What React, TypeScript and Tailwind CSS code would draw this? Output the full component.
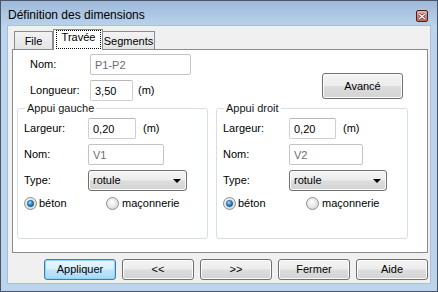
import { useId } from 'react';

const btnFace =
  'border-[#707070] bg-[linear-gradient(to_bottom,#f4f4f4_0%,#ececec_48%,#dddddd_52%,#d3d3d3_100%)] shadow-[inset_0_0_0_1px_#fbfbfb]';
const btnDefault =
  'border-[#3c7fb1] bg-[linear-gradient(to_bottom,#eaf6fd_0%,#d9f0fc_48%,#bee6fd_52%,#a7d9f5_100%)] shadow-[inset_0_0_0_1px_#8fd3f7]';

function WinButton({
  label,
  primary = false,
  className = '',
}: {
  label: string;
  primary?: boolean;
  className?: string;
}) {
  return (
    <button
      className={`flex items-center justify-center rounded-[3px] border text-[11px] leading-[13px] text-black ${
        primary ? btnDefault : btnFace
      } ${className}`}
    >
      {label}
    </button>
  );
}

function TextBox({ value, width, disabled = false }: { value: string; width: number; disabled?: boolean }) {
  return (
    <input
      readOnly
      value={value}
      style={{ width }}
      className={`h-[21px] rounded-[2px] border bg-white px-[4px] text-[11px] leading-[13px] outline-none ${
        disabled ? 'border-[#c4c4c4] text-[#6d6d6d]' : 'border-[#d0d0d0] border-t-[#b9b9b9] text-black'
      }`}
    />
  );
}

function Select({ value, width }: { value: string; width: number }) {
  return (
    <div
      style={{ width }}
      className={`flex h-[21px] items-center rounded-[3px] border pl-[4px] pr-[5px] text-[11px] leading-[13px] text-black ${btnFace}`}
    >
      <span className="flex-1">{value}</span>
      <svg width="8" height="4" viewBox="0 0 8 4">
        <path d="M0 0H8L4 4Z" fill="#000" />
      </svg>
    </div>
  );
}

function Radio({ checked }: { checked?: boolean }) {
  const id = useId().replace(/:/g, '');
  return (
    <svg width="13" height="13" viewBox="0 0 13 13" className="shrink-0">
      <defs>
        <radialGradient id={`f${id}`} cx="45%" cy="40%" r="65%">
          <stop offset="0" stopColor="#ffffff" />
          <stop offset="1" stopColor="#d6d6d6" />
        </radialGradient>
        <radialGradient id={`d${id}`} cx="40%" cy="35%" r="70%">
          <stop offset="0" stopColor="#a9e0fb" />
          <stop offset="0.5" stopColor="#2f8fd4" />
          <stop offset="1" stopColor="#1b5187" />
        </radialGradient>
      </defs>
      <circle cx="6.5" cy="6.5" r="6" fill={`url(#f${id})`} stroke="#8e8f8f" />
      {checked && <circle cx="6.5" cy="6.5" r="3.2" fill={`url(#d${id})`} stroke="#1f4a75" strokeWidth="0.6" />}
    </svg>
  );
}

function Row({ label, labelWidth, children }: { label: string; labelWidth: number; children: React.ReactNode }) {
  return (
    <div className="flex h-[21px] items-center">
      <span style={{ width: labelWidth }} className="shrink-0">
        {label}
      </span>
      {children}
    </div>
  );
}

function Appui({
  title,
  nom,
  labelWidth,
  width,
  nomWidth,
  selectWidth,
  largeurWidth,
  radioWidth,
}: {
  title: string;
  nom: string;
  labelWidth: number;
  width: number;
  nomWidth: number;
  selectWidth: number;
  largeurWidth: number;
  radioWidth: number;
}) {
  return (
    <fieldset style={{ width }} className="rounded-[3px] border border-[#d5dfe5] pb-[28px] pl-[6px]">
      <legend className="ml-[1px] px-[2px] text-[11px] leading-[13px] text-[#151515]">{title}</legend>
      <div className="mt-[3px] flex flex-col gap-[5px]">
        <Row label="Largeur:" labelWidth={labelWidth}>
          <TextBox value="0,20" width={largeurWidth} />
          <span className="ml-[7px]">(m)</span>
        </Row>
        <Row label="Nom:" labelWidth={labelWidth}>
          <TextBox value={nom} width={nomWidth} disabled />
        </Row>
        <Row label="Type:" labelWidth={labelWidth}>
          <Select value="rotule" width={selectWidth} />
        </Row>
      </div>
      <div className="mt-[6px] flex h-[13px] items-center">
        <div style={{ width: radioWidth }} className="flex items-center gap-[2px]">
          <Radio checked />
          <span>béton</span>
        </div>
        <div className="flex items-center gap-[3px]">
          <Radio />
          <span>maçonnerie</span>
        </div>
      </div>
    </fieldset>
  );
}

export default function App() {
  return (
    <div className="flex h-[292px] w-[438px] flex-col border border-[#4a5668] bg-[#bcd4ec] font-['Liberation_Sans',Arial,sans-serif] text-[11px] leading-[13px] text-black">
      {/* title bar */}
      <div className="flex h-[24px] shrink-0 items-start bg-[linear-gradient(to_bottom,#9fb9da,#b9d1ea)]">
        <span className="pl-[7px] pt-[7px] text-[12px] leading-[15px] text-black">Définition des dimensions</span>
        <div className="ml-auto mr-[9px] mt-[9px] flex h-[12px] w-[12px] items-center justify-center rounded-[2px] border border-[#4b1f1f] bg-[linear-gradient(to_bottom,#eab1a7,#c9645a)]">
          <svg width="8" height="7" viewBox="0 0 8 7">
            <path d="M1 1L7 6M7 1L1 6" stroke="#5a2a2a" strokeWidth="2.6" />
            <path d="M1 1L7 6M7 1L1 6" stroke="#ffffff" strokeWidth="1.5" />
          </svg>
        </div>
      </div>

      {/* client */}
      <div className="mx-[6px] flex h-[259px] flex-col border border-[#a9bfd9] bg-[#f0f0f0] pl-[4px] pr-[2px] pt-[3px]">
        {/* tabs */}
        <div className="flex h-[20px] items-end pl-[2px]">
          <div className="flex h-[18px] w-[39px] justify-center border border-b-0 border-[#898c95] bg-[linear-gradient(to_bottom,#f3f3f3,#e4e4e4)] pt-[3px]">
            File
          </div>
          <div className="relative z-10 -mb-px flex h-[21px] w-[50px] border border-b-0 border-[#898c95] bg-white pl-[2px] pr-[1px]">
            <span className="flex h-[19px] flex-1 justify-center border border-dotted border-black">Travée</span>
          </div>
          <div className="flex h-[18px] w-[52px] justify-center border border-b-0 border-l-0 border-[#898c95] bg-[linear-gradient(to_bottom,#f3f3f3,#e4e4e4)] pt-[3px]">
            Segments
          </div>
        </div>

        {/* panel */}
        <div className="flex h-[204px] flex-col border border-[#898c95] bg-white">
          <div className="flex items-start">
            <div className="ml-[17px] mt-[4px] flex flex-col gap-[5px]">
              <Row label="Nom:" labelWidth={60}>
                <TextBox value="P1-P2" width={101} disabled />
              </Row>
              <Row label="Longueur:" labelWidth={60}>
                <TextBox value="3,50" width={43} />
                <span className="ml-[5px]">(m)</span>
              </Row>
            </div>
            <WinButton label="Avancé" className="ml-auto mr-[24px] mt-[23px] h-[26px] w-[81px]" />
          </div>
          <div className="ml-[4px] mt-[1px] flex gap-[8px]">
            <Appui
              title="Appui gauche"
              nom="V1"
              width={191}
              labelWidth={64}
              largeurWidth={48}
              nomWidth={76}
              selectWidth={99}
              radioWidth={82}
            />
            <Appui
              title="Appui droit"
              nom="V2"
              width={192}
              labelWidth={66}
              largeurWidth={47}
              nomWidth={74}
              selectWidth={98}
              radioWidth={83}
            />
          </div>
        </div>

        {/* buttons */}
        <div className="mt-[6px] flex justify-end gap-[6px]">
          <WinButton label="Appliquer" primary className="h-[21px] w-[72px]" />
          <WinButton label="<<" className="h-[21px] w-[72px]" />
          <WinButton label=">>" className="h-[21px] w-[72px]" />
          <WinButton label="Fermer" className="h-[21px] w-[72px]" />
          <WinButton label="Aide" className="h-[21px] w-[72px]" />
        </div>
      </div>
    </div>
  );
}
